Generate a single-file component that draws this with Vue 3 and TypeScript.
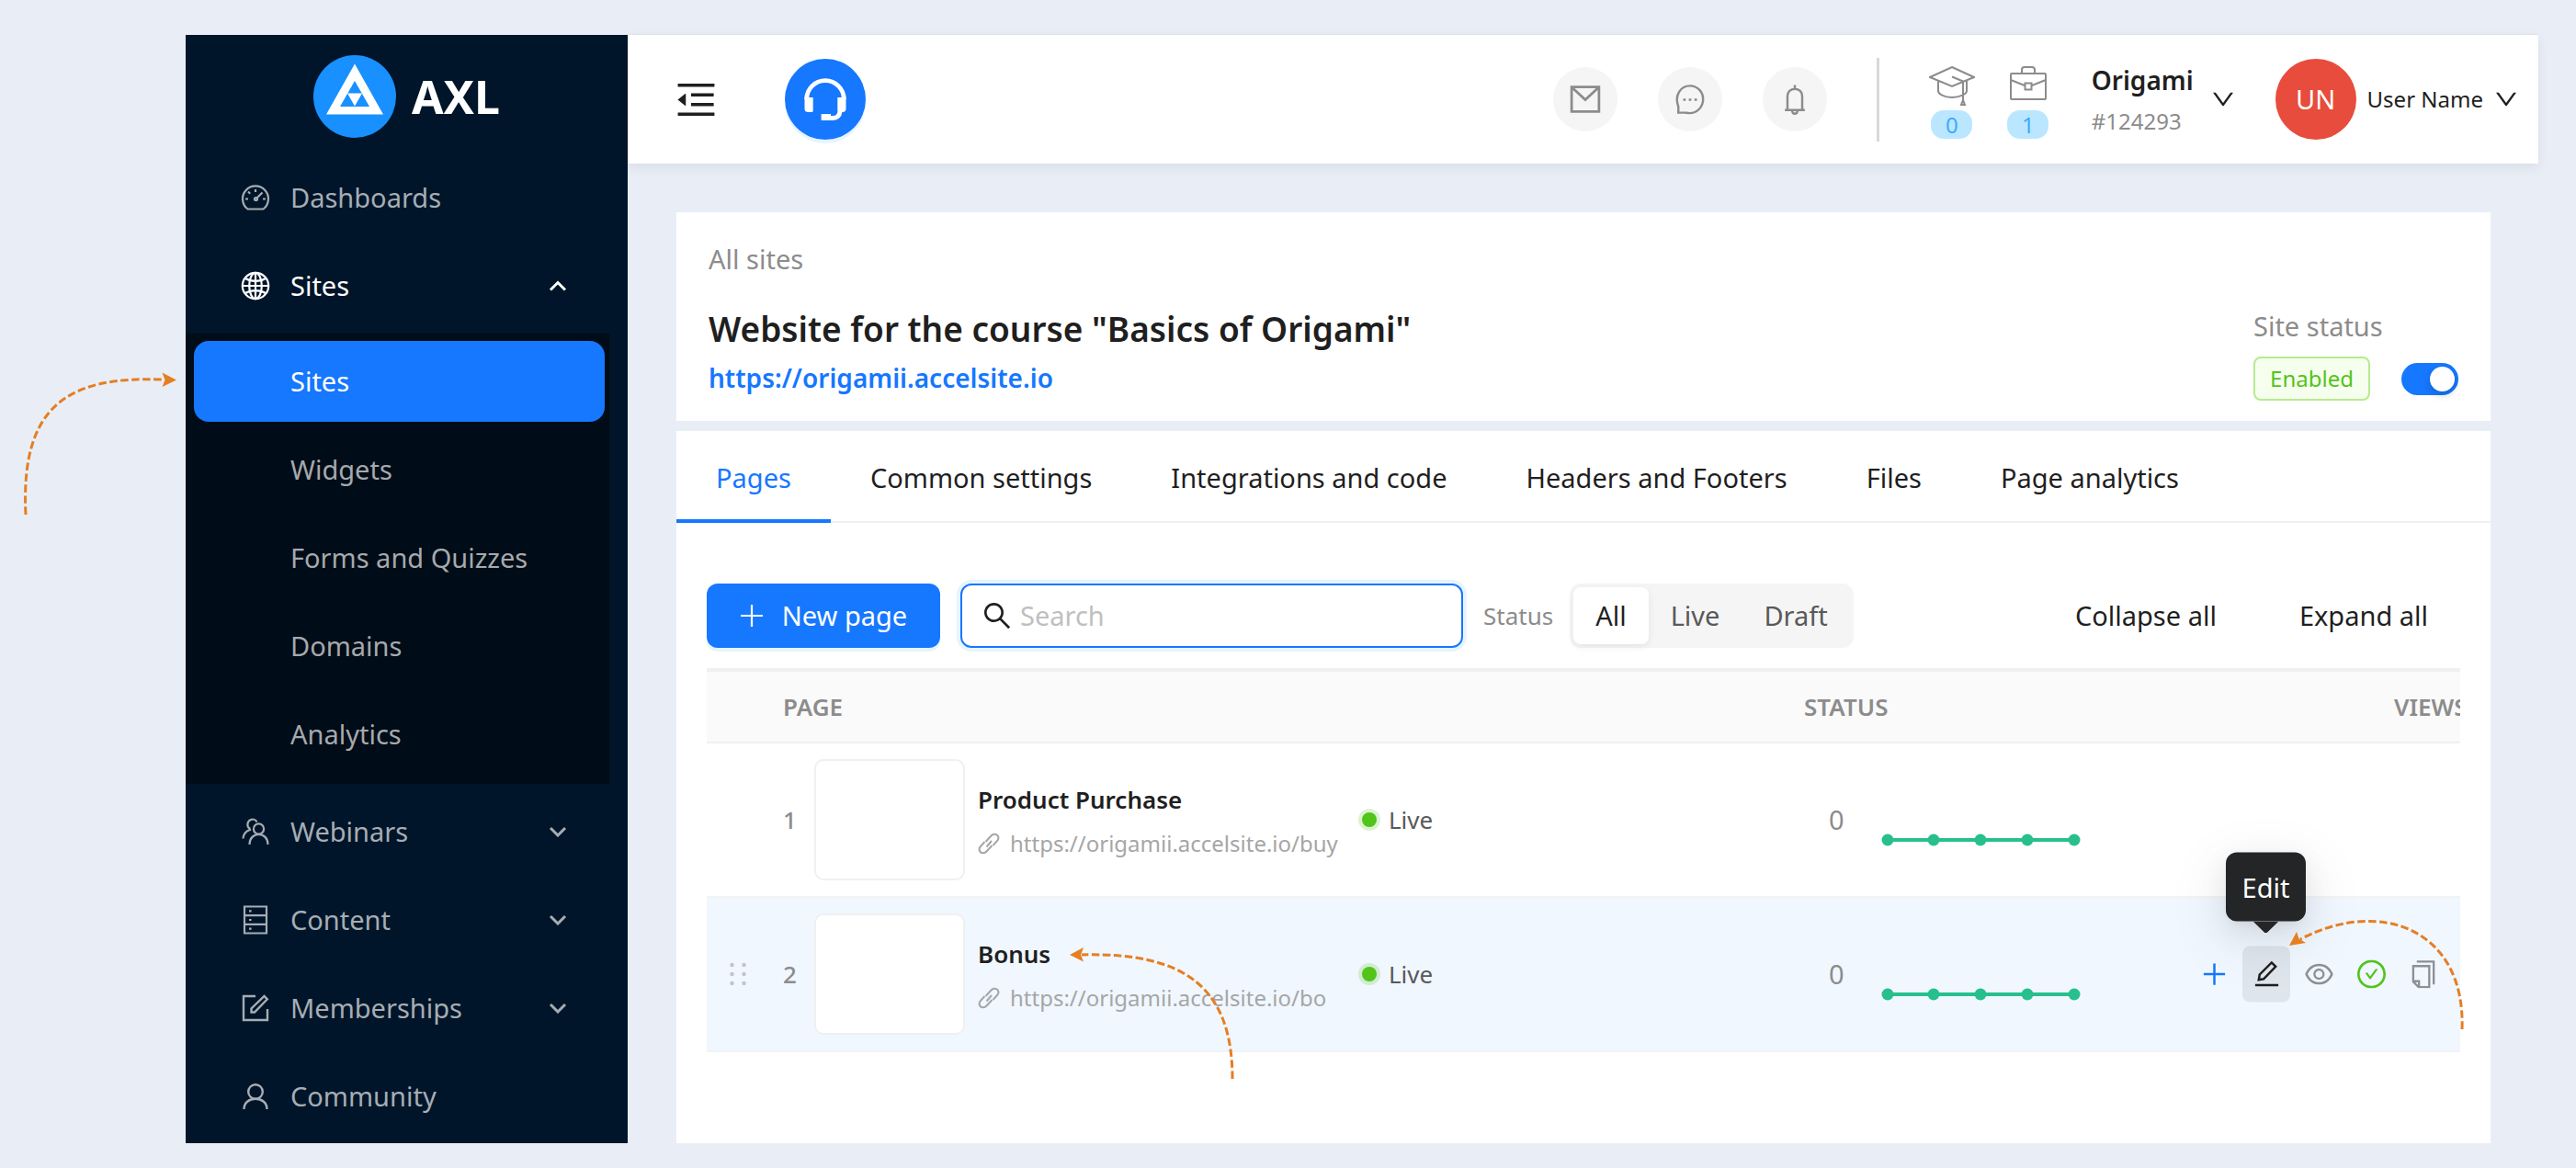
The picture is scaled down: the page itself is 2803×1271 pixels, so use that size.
<script setup lang="ts">
import { ref } from 'vue'

interface PageRow {
  id: number
  name: string
  url: string
  status: string
  views: number
  active: boolean
}

const subItems = ['Sites', 'Widgets', 'Forms and Quizzes', 'Domains', 'Analytics']
const tabs = ['Pages', 'Common settings', 'Integrations and code', 'Headers and Footers', 'Files', 'Page analytics']
const statuses = ['All', 'Live', 'Draft']

const rows: PageRow[] = [
  { id: 1, name: 'Product Purchase', url: 'https://origamii.accelsite.io/buy', status: 'Live', views: 0, active: false },
  { id: 2, name: 'Bonus', url: 'https://origamii.accelsite.io/bo', status: 'Live', views: 0, active: true },
]

const activeSub = ref('Sites')
const activeTab = ref('Pages')
const statusFilter = ref('All')
const search = ref('')
const enabled = ref(true)

const downPath =
  'M884 256h-75c-5.1 0-9.9 2.5-12.9 6.6L512 654.2 227.9 262.6c-3-4.1-7.8-6.6-12.9-6.6h-75c-6.5 0-10.3 7.4-6.5 12.7l352.6 486.1c12.8 17.6 39 17.6 51.7 0l352.6-486.1c3.9-5.3.1-12.7-6.4-12.7z'
const sparkX = [8, 58, 109, 160, 211]
</script>

<template>
  <div class="page">
    <aside class="sidebar">
      <div class="logo">
        <svg class="logo-mark" viewBox="0 0 90 90" aria-hidden="true">
          <circle cx="45" cy="45" r="45" fill="#1890ff" />
          <path fill="#fff" fill-rule="evenodd" d="M45 9.500L76 64.500H14ZM45 28L29 56H61Z" />
          <path fill="#fff" d="M37 41.500H53L45 55.500Z" />
        </svg>
        <span class="logo-text">AXL</span>
      </div>

      <nav class="menu">
        <a class="item" href="#">
          <svg class="ico" viewBox="0 0 32 32" fill="none" stroke="currentColor" stroke-width="2.200">
            <path d="M7.500 28.500H24.500A14 14 0 1 0 7.500 28.500Z" stroke-linejoin="round" />
            <path d="M16 7V10M5 17.500H8M24 17.500H27M8 9.500L10.200 11.700M23.500 10.500L17 17" />
            <circle cx="16.500" cy="17.500" r="1.500" />
          </svg>
          <span>Dashboards</span>
        </a>
        <a class="item open" href="#">
          <svg class="ico" viewBox="0 0 32 32" fill="none" stroke="currentColor" stroke-width="2.200">
            <circle cx="16" cy="16" r="14.200" />
            <ellipse cx="16" cy="16" rx="6.800" ry="14.200" />
            <path d="M16 2V30M2 16H30M5 8C11 11.800 21 11.800 27 8M5 24C11 20.200 21 20.200 27 24" />
          </svg>
          <span>Sites</span>
          <svg class="chev" viewBox="0 0 20 12"><path d="M2 10.500L10 2.500L18 10.500" /></svg>
        </a>
        <div class="sub">
          <a
            v-for="s in subItems"
            :key="s"
            class="item sub-item"
            :class="{ selected: s === activeSub }"
            href="#"
            @click.prevent="activeSub = s"
            >{{ s }}</a
          >
        </div>
        <a class="item" href="#">
          <svg class="ico" viewBox="0 0 32 32" fill="none" stroke="currentColor" stroke-width="2.200">
            <circle cx="19.500" cy="13" r="5.600" />
            <path d="M9.500 30C9.500 23 14 19 19.500 19S29.500 23 29.500 30" />
            <path d="M17.500 5.500C16.500 3 13.500 2 11 3C7 4.500 6 10 9.500 12.500L10 14C5.500 15.500 2.800 19 2.500 23.500" />
          </svg>
          <span>Webinars</span>
          <svg class="chev" viewBox="0 0 20 12"><path d="M2 2L10 10L18 2" /></svg>
        </a>
        <a class="item" href="#">
          <svg class="ico" viewBox="0 0 32 32" fill="none" stroke="currentColor" stroke-width="2.200">
            <path d="M4 1.500H28V30.500H4ZM4 11.200H28M4 20.800H28" />
            <path d="M9 6.400H11.600M9 16H11.600M9 25.600H11.600" />
          </svg>
          <span>Content</span>
          <svg class="chev" viewBox="0 0 20 12"><path d="M2 2L10 10L18 2" /></svg>
        </a>
        <a class="item" href="#">
          <svg class="ico" viewBox="0 0 32 32" fill="none" stroke="currentColor" stroke-width="2.400">
            <path d="M16 3H3V29H29V17" />
            <path d="M11.500 20.500V16.500L25.500 3L28.800 6.300L15 20.500Z" />
          </svg>
          <span>Memberships</span>
          <svg class="chev" viewBox="0 0 20 12"><path d="M2 2L10 10L18 2" /></svg>
        </a>
        <a class="item" href="#">
          <svg class="ico" viewBox="0 0 32 32" fill="none" stroke="currentColor" stroke-width="2.400">
            <circle cx="16" cy="11" r="7.800" />
            <path d="M3.500 30C3.500 23 9 18.800 16 18.800S28.500 23 28.500 30" />
          </svg>
          <span>Community</span>
        </a>
      </nav>

      <svg class="hint hint-side" viewBox="0 0 180 160" aria-hidden="true">
        <path class="dash" d="M18 156C12 36 65 5 168 9" />
        <path class="head" d="M182 9.500L166.500 1.500L169.500 9.500L166.500 17Z" />
      </svg>
    </aside>

    <div class="main">
      <header class="topbar">
        <button class="bare" type="button" aria-label="Collapse menu">
          <svg class="fold" viewBox="0 0 1024 1024">
            <path
              fill="currentColor"
              d="M408 442h480c4.400 0 8-3.600 8-8v-56c0-4.400-3.600-8-8-8H408c-4.400 0-8 3.600-8 8v56c0 4.400 3.600 8 8 8zm-8 204c0 4.400 3.600 8 8 8h480c4.400 0 8-3.600 8-8v-56c0-4.400-3.600-8-8-8H408c-4.400 0-8 3.600-8 8v56zm504-486H120c-4.400 0-8 3.600-8 8v56c0 4.400 3.600 8 8 8h784c4.400 0 8-3.600 8-8v-56c0-4.400-3.600-8-8-8zm0 632H120c-4.400 0-8 3.600-8 8v56c0 4.400 3.600 8 8 8h784c4.400 0 8-3.600 8-8v-56c0-4.400-3.600-8-8-8zM115.400 518.900L271.700 642c5.800 4.600 14.400.5 14.400-6.900V388.900c0-7.400-8.500-11.500-14.400-6.900L115.400 505.100a8.740 8.740 0 000 13.800z"
            />
          </svg>
        </button>
        <button class="support" type="button" aria-label="Support">
          <svg viewBox="0 0 46 46" fill="none" stroke="#fff">
            <path d="M2.700 23A20.300 20.300 0 0 1 43.300 23" stroke-width="4.800" />
            <path d="M0.500 21H9.700V35.500Q9.700 37 8 37H3.500Q0.500 36.500 0.500 33.500ZM45.500 21H36.300V35.500Q36.300 37 38 37H42.500Q45.500 36.500 45.500 33.500Z" fill="#fff" stroke="none" />
            <path d="M39 36.500C38.500 41 35.500 43.500 31.500 43.500H27" stroke-width="5" />
            <path d="M18.600 39H29V46H18.600Z" fill="#fff" stroke="none" />
          </svg>
        </button>

        <div class="top-right">
          <button class="round" type="button" aria-label="Mail">
            <svg viewBox="0 0 32 32"><path d="M2 3.500H30V28.500H2ZM3 4.500L16 16.500L29 4.500" /></svg>
          </button>
          <button class="round" type="button" aria-label="Messages">
            <svg viewBox="0 0 36 36">
              <path d="M4.500 33.500V26.500C-0.500 13 7.500 2.500 18 2.500C26.500 2.500 33 9.500 33 18C33 27 26 34 17.500 34C14.500 34 13.500 33.500 11.500 33.500Z" />
              <path d="M10 18.500H13M16.500 18.500H19.500M23 18.500H26" />
            </svg>
          </button>
          <button class="round" type="button" aria-label="Notifications">
            <svg viewBox="0 0 36 36">
              <path d="M6.500 30.500H29.500M9.500 30.500V14.500C9.500 9.500 13 6 18 6S26.500 9.500 26.500 14.500V30.500M18 6V1.500M15 31C15 36 21 36 21 31" />
            </svg>
          </button>
          <span class="divider"></span>
          <div class="counters">
            <div class="counter">
              <svg class="cap" viewBox="0 0 50 44">
                <path d="M25 1L49 12L25 22L1 12ZM10 16V27C10 30 16 34 25 34S41 30 41 27V16M25 11.500L37 16.500V38M37 37L35 42H39Z" />
              </svg>
              <span class="pill">0</span>
            </div>
            <div class="counter">
              <svg class="cap" viewBox="0 0 50 44">
                <path d="M7 8H43Q44 8 44 9V35Q44 36 43 36H7Q6 36 6 35V9Q6 8 7 8ZM18 8V4Q18 1 21 1H29Q32 1 32 4V8M6 15L21 21M44 15L29 21M21.500 18.500H28.500V25.500H21.500Z" />
              </svg>
              <span class="pill">1</span>
            </div>
          </div>
          <button class="bare account" type="button">
            <span class="acc-text">
              <span class="acc-name">Origami</span>
              <span class="acc-id">#124293</span>
            </span>
            <svg class="down" viewBox="132 232 760 560"><path :d="downPath" fill="currentColor" /></svg>
          </button>
          <button class="bare user" type="button">
            <span class="avatar">UN</span>
            <span class="user-name">User Name</span>
            <svg class="down" viewBox="132 232 760 560"><path :d="downPath" fill="currentColor" /></svg>
          </button>
        </div>
      </header>

      <main class="content">
        <section class="card info">
          <div>
            <a class="crumb" href="#">All sites</a>
            <h1>Website for the course "Basics of Origami"</h1>
            <a class="site-url" href="#">https://origamii.accelsite.io</a>
          </div>
          <div class="site-status">
            <label for="site-switch">Site status</label>
            <div class="status-row">
              <span class="tag">Enabled</span>
              <input id="site-switch" v-model="enabled" class="switch" type="checkbox" role="switch" />
            </div>
          </div>
        </section>

        <section class="card pages">
          <nav class="tabs">
            <button
              v-for="t in tabs"
              :key="t"
              type="button"
              class="tab"
              :class="{ current: t === activeTab }"
              @click="activeTab = t"
            >
              {{ t }}
            </button>
          </nav>

          <div class="toolbar">
            <button class="primary" type="button">
              <svg viewBox="0 0 26 26"><path d="M13 1V25M1 13H25" stroke="#fff" stroke-width="2.200" /></svg>
              <span>New page</span>
            </button>
            <label class="search">
              <svg viewBox="112 112 800 800">
                <path
                  fill="currentColor"
                  d="M909.600 854.500L649.900 594.800C690.200 542.700 712 479 712 412c0-80.200-31.300-155.400-87.900-212.100-56.600-56.700-132-87.900-212.100-87.900s-155.500 31.300-212.100 87.900C143.200 256.500 112 331.800 112 412c0 80.100 31.300 155.500 87.900 212.100C256.500 680.800 331.800 712 412 712c67 0 130.600-21.800 182.700-62l259.700 259.600a8.200 8.200 0 0011.600 0l43.600-43.500a8.200 8.200 0 000-11.600zM570.400 570.400C528 612.700 471.800 636 412 636s-116-23.300-158.400-65.600C211.300 528 188 471.800 188 412s23.300-116.100 65.600-158.400C296 211.300 352.200 188 412 188s116.100 23.200 158.400 65.600S636 352.200 636 412s-23.300 116.100-65.600 158.400z"
                />
              </svg>
              <input v-model="search" type="text" placeholder="Search" aria-label="Search" />
            </label>
            <div class="filter" role="radiogroup" aria-labelledby="status-label">
              <span id="status-label" class="filter-label">Status</span>
              <div class="segmented">
                <label v-for="s in statuses" :key="s" :class="{ on: s === statusFilter }">
                  <input v-model="statusFilter" type="radio" name="status" :value="s" />{{ s }}
                </label>
              </div>
            </div>
            <div class="tree-actions">
              <button class="text-btn" type="button">Collapse all</button>
              <button class="text-btn" type="button">Expand all</button>
            </div>
          </div>

          <div class="table-area">
            <table>
              <colgroup>
                <col class="c-page" />
                <col />
                <col class="c-spark" />
                <col class="c-views" />
              </colgroup>
              <thead>
                <tr>
                  <th class="th-page" colspan="2">PAGE</th>
                  <th>STATUS</th>
                  <th class="th-views">VIEWS</th>
                </tr>
              </thead>
              <tbody>
                <tr v-for="r in rows" :key="r.id" :class="{ hover: r.active }">
                  <td>
                    <div class="page-cell">
                      <span class="handle">
                        <svg v-if="r.active" viewBox="0 0 18 26">
                          <circle v-for="n in 6" :key="n" :cx="n % 2 ? 2.5 : 15.5" :cy="3 + 10 * Math.floor((n - 1) / 2)" r="2.200" />
                        </svg>
                      </span>
                      <span class="num">{{ r.id }}</span>
                      <span class="thumb"></span>
                      <span class="names">
                        <span class="name">{{ r.name }}</span>
                        <a class="link" href="#">
                          <svg viewBox="0 0 24 24" fill="none" stroke="currentColor" stroke-width="2">
                            <path d="M8.500 10L14.500 3.500C16.500 1.200 19.800 1.200 21.300 3C22.800 4.800 22.500 7.500 20.800 9.300L16.500 14M15.500 14L9.500 20.500C7.500 22.800 4.200 22.800 2.700 21C1.200 19.200 1.500 16.500 3.200 14.700L7.500 10" />
                            <path d="M9.500 15.500L15 9" />
                          </svg>
                          <span>{{ r.url }}</span>
                        </a>
                      </span>
                    </div>
                  </td>
                  <td>
                    <div class="live"><i class="dot"></i>{{ r.status }}</div>
                  </td>
                  <td>
                    <div class="views">
                      <span>{{ r.views }}</span>
                      <svg class="spark" viewBox="0 0 220 14">
                        <path d="M8 7H211" stroke="#27c08d" stroke-width="4" />
                        <circle v-for="x in sparkX" :key="x" :cx="x" cy="7" r="6.500" fill="#27c08d" />
                      </svg>
                    </div>
                  </td>
                  <td class="last">
                    <div v-if="r.active" class="row-actions">
                      <button type="button" class="act blue" aria-label="Add">
                        <svg viewBox="0 0 32 32"><path d="M16 4V28M4 16H28" stroke-width="2.600" /></svg>
                      </button>
                      <button type="button" class="act pressed" aria-label="Edit page">
                        <svg viewBox="0 0 32 32"><path d="M3 28.500H29M7 22.500L8 16.500L21.500 3L26 7.500L12.500 21.500Z" stroke-width="2.600" /></svg>
                        <span class="tooltip" role="tooltip">Edit</span>
                      </button>
                      <button type="button" class="act" aria-label="Preview">
                        <svg viewBox="64 64 896 896">
                          <path
                            class="solid"
                            d="M942.200 486.200C847.400 286.500 704.100 186 512 186c-192.200 0-335.400 100.500-430.200 300.300a60.300 60.300 0 000 51.500C176.600 737.500 319.900 838 512 838c192.200 0 335.400-100.500 430.200-300.300 7.700-16.200 7.700-35 0-51.500zM512 766c-161.300 0-279.400-81.800-362.700-254C232.600 339.800 350.700 258 512 258c161.300 0 279.400 81.800 362.700 254C791.500 684.200 673.400 766 512 766zm-4-430c-97.200 0-176 78.800-176 176s78.800 176 176 176 176-78.800 176-176-78.800-176-176-176zm0 288c-61.900 0-112-50.100-112-112s50.100-112 112-112 112 50.100 112 112-50.100 112-112 112z"
                          />
                        </svg>
                      </button>
                      <button type="button" class="act green" aria-label="Publish">
                        <svg viewBox="64 64 896 896">
                          <path
                            class="solid"
                            d="M699 353h-46.900c-10.200 0-19.900 4.900-25.900 13.300L469 584.300l-71.200-98.800c-6-8.300-15.600-13.300-25.900-13.300H325c-6.500 0-10.300 7.400-6.500 12.700l124.600 172.800a31.800 31.800 0 0051.700 0l210.600-292c3.900-5.300.1-12.700-6.400-12.700z"
                          />
                          <path
                            class="solid"
                            d="M512 64C264.600 64 64 264.600 64 512s200.600 448 448 448 448-200.600 448-448S759.400 64 512 64zm0 820c-205.400 0-372-166.600-372-372s166.600-372 372-372 372 166.600 372 372-166.600 372-372 372z"
                          />
                        </svg>
                      </button>
                      <button type="button" class="act" aria-label="Copy">
                        <svg viewBox="0 0 32 32">
                          <path d="M8 2H27V27.500M4 7H22V30.500H10L4 24.500ZM4 24H10.500V30" stroke-width="2.400" />
                        </svg>
                      </button>
                    </div>
                  </td>
                </tr>
              </tbody>
            </table>

            <svg class="hint hint-name" viewBox="0 0 190 150" aria-hidden="true">
              <path class="dash" d="M181 145C181 46 130 7 17 10" />
              <path class="head" d="M4 10L19 2L16 10L19 17.500Z" />
            </svg>
            <svg class="hint hint-edit" viewBox="0 0 200 130" aria-hidden="true">
              <path class="dash" d="M188 126C192 18 100 -18 12 28" />
              <path class="head" d="M0 35L8 20L10.500 27.500L18 32Z" />
            </svg>
          </div>
        </section>
      </main>
    </div>
  </div>
</template>

<style>
body {
  margin: 0;
}
</style>

<style scoped>
.page {
  box-sizing: border-box;
  min-height: 100vh;
  display: flex;
  padding: 38px 41px 27px 202px;
  background: #e9eef6;
  color: #1f1f1f;
  font: 29px/44px 'Noto Sans', 'Open Sans', sans-serif;
}
.page *,
.page *::before {
  box-sizing: border-box;
}
a {
  color: inherit;
  text-decoration: none;
}
button {
  font: inherit;
  color: inherit;
  cursor: pointer;
  border: 0;
  padding: 0;
  background: none;
}
svg {
  display: block;
  flex: none;
}

/* sidebar */
.sidebar {
  position: relative;
  flex: none;
  width: 481px;
  background: #001529;
}
.logo {
  display: flex;
  justify-content: center;
  align-items: center;
  gap: 17px;
  padding-top: 22px;
  margin-bottom: 21px;
}
.logo-mark {
  width: 90px;
  height: 90px;
}
.logo-text {
  color: #fff;
  font-size: 50px;
  font-weight: 700;
}
.menu {
  display: flex;
  flex-direction: column;
  gap: 8px;
}
.item {
  display: flex;
  align-items: center;
  height: 88px;
  padding: 0 66px 0 60px;
  color: #a6adb4;
}
.item.open {
  color: #fff;
}
.ico {
  width: 32px;
  height: 32px;
  margin-right: 22px;
}
.chev {
  width: 20px;
  height: 12px;
  margin-left: auto;
  fill: none;
  stroke: currentColor;
  stroke-width: 3;
}
.sub {
  display: flex;
  flex-direction: column;
  gap: 8px;
  width: 461px;
  padding: 8px 5px 10px 9px;
  background: #000c17;
}
.sub-item {
  padding: 0 0 0 105px;
  border-radius: 16px;
  color: #a6a9ad;
}
.sub-item.selected {
  background: #1677ff;
  color: #fff;
}

/* top bar */
.main {
  flex: 1;
  min-width: 0;
  display: flex;
  flex-direction: column;
}
.topbar {
  display: flex;
  align-items: center;
  height: 140px;
  padding: 0 24px 0 49px;
  background: #fff;
  box-shadow: 0 -1px 0 #dfe3e8, 0 4px 12px rgba(0, 21, 41, 0.08);
}
.fold {
  width: 51px;
  height: 51px;
}
.support {
  display: grid;
  place-items: center;
  width: 88px;
  height: 88px;
  margin-left: 71px;
  border-radius: 50%;
  background: #1677ff;
  box-shadow: 0 4px 0 rgba(5, 145, 255, 0.1);
}
.support svg {
  width: 46px;
  height: 46px;
}
.top-right {
  display: flex;
  align-items: center;
  margin-left: auto;
}
.round {
  display: grid;
  place-items: center;
  width: 70px;
  height: 70px;
  margin-right: 44px;
  border-radius: 50%;
  background: #f5f5f5;
}
.round svg {
  width: 34px;
  height: 36px;
  fill: none;
  stroke: #8c8c8c;
  stroke-width: 2.6;
}
.divider {
  width: 3px;
  height: 91px;
  margin: 0 54px 0 10px;
  background: #d9d9d9;
}
.counters {
  display: flex;
  gap: 33px;
  padding-top: 7px;
}
.counter {
  display: flex;
  flex-direction: column;
  align-items: center;
  gap: 4px;
}
.cap {
  width: 50px;
  height: 44px;
  fill: none;
  stroke: #8c8c8c;
  stroke-width: 2;
}
.pill {
  width: 45px;
  height: 31px;
  border-radius: 14px;
  background: #bae7ff;
  color: #40a9ff;
  font-size: 24px;
  line-height: 31px;
  text-align: center;
}
.account {
  display: flex;
  align-items: center;
  gap: 21px;
  margin-left: 44px;
  text-align: left;
}
.acc-text {
  display: flex;
  flex-direction: column;
  padding-top: 2px;
}
.acc-name {
  font-size: 28px;
  font-weight: 600;
  line-height: 46px;
}
.acc-id {
  color: #8c8c8c;
  font-size: 24px;
}
.down {
  width: 22px;
  height: 16px;
}
.user {
  display: flex;
  align-items: center;
  margin-left: 46px;
}
.avatar {
  width: 88px;
  height: 88px;
  margin-right: 12px;
  border-radius: 50%;
  background: #e74c3c;
  color: #fff;
  line-height: 88px;
}
.user-name {
  margin-right: 14px;
  font-size: 24px;
}

/* content */
.content {
  flex: 1;
  display: flex;
  flex-direction: column;
  gap: 11px;
  padding: 53px 52px 0 53px;
}
.card {
  background: #fff;
}
.info {
  display: flex;
  justify-content: space-between;
  align-items: flex-end;
  padding: 28px 35px 22px;
}
.crumb {
  display: block;
  color: #8c8c8c;
  line-height: 46px;
}
h1 {
  margin: 23px 0 0;
  font-size: 37px;
  font-weight: 600;
  line-height: 60px;
}
.site-url {
  display: block;
  margin-bottom: 2px;
  color: #1677ff;
  font-size: 28px;
  font-weight: 600;
  line-height: 46px;
}
.site-status label {
  color: #8c8c8c;
}
.status-row {
  display: flex;
  align-items: center;
  gap: 34px;
  margin-top: 11px;
}
.tag {
  width: 127px;
  height: 48px;
  border: 2px solid #b7eb8f;
  border-radius: 8px;
  background: #f6ffed;
  color: #52c41a;
  font-size: 24px;
  text-align: center;
}
.switch {
  appearance: none;
  width: 62px;
  height: 35px;
  margin: 0;
  padding: 4px;
  border-radius: 18px;
  background: #bfbfbf;
}
.switch::before {
  content: '';
  display: block;
  width: 27px;
  height: 27px;
  border-radius: 50%;
  background: #fff;
  box-shadow: 0 4px 8px rgba(0, 35, 11, 0.2);
}
.switch:checked {
  background: #1677ff;
}
.switch:checked::before {
  margin-left: auto;
}
.pages {
  flex: 1;
}
.tabs {
  display: flex;
  box-shadow: inset 0 -2px 0 #f0f0f0;
}
.tab {
  height: 100px;
  padding: 6px 43px 0;
  border-bottom: 4px solid transparent;
}
.tab.current {
  border-color: #1677ff;
  color: #1677ff;
}

/* toolbar */
.toolbar {
  display: flex;
  align-items: center;
  gap: 22px;
  padding: 66px 33px 22px;
}
.primary {
  display: flex;
  justify-content: center;
  align-items: center;
  gap: 20px;
  width: 254px;
  height: 70px;
  border-radius: 12px;
  background: #1677ff;
  color: #fff;
  box-shadow: 0 4px 0 rgba(5, 145, 255, 0.1);
}
.primary svg {
  width: 26px;
  height: 26px;
}
.search {
  flex: 0 1 547px;
  display: flex;
  align-items: center;
  gap: 11px;
  height: 70px;
  padding: 0 24px;
  border: 2px solid #1677ff;
  border-radius: 12px;
  box-shadow: 0 0 0 4px rgba(5, 145, 255, 0.1);
}
.search svg {
  width: 28px;
  height: 28px;
}
.search input {
  flex: 1;
  min-width: 0;
  padding: 0;
  border: 0;
  outline: 0;
  background: none;
  font: inherit;
  color: inherit;
}
.search input::placeholder {
  color: #bfbfbf;
}
.filter {
  display: flex;
  align-items: center;
  gap: 18px;
}
.filter-label {
  color: #8c8c8c;
  font-size: 26px;
}
.segmented {
  display: flex;
  padding: 4px;
  border-radius: 12px;
  background: #f5f5f5;
  color: #595959;
}
.segmented label {
  position: relative;
  height: 62px;
  padding: 0 24px;
  border-radius: 8px;
  line-height: 62px;
}
.segmented .on {
  background: #fff;
  color: #1f1f1f;
  box-shadow: 0 4px 8px rgba(0, 0, 0, 0.04), 0 2px 12px rgba(0, 0, 0, 0.03);
}
.segmented input {
  position: absolute;
  opacity: 0;
}
.tree-actions {
  display: flex;
  gap: 20px;
  margin-left: auto;
}
.text-btn {
  height: 70px;
  padding: 0 35px;
}

/* table */
.table-area {
  position: relative;
  margin: 0 33px;
}
table {
  width: 100%;
  table-layout: fixed;
  border-collapse: separate;
  border-spacing: 0;
}
.c-page {
  width: 701px;
}
.c-spark {
  width: 632px;
}
.c-views {
  width: 82px;
}
th {
  height: 82px;
  padding: 0;
  border-top: 4px solid #f0f0f0;
  border-bottom: 2px solid #f0f0f0;
  background: #fafafa;
  color: #8c8c8c;
  font-size: 26px;
  font-weight: 600;
  text-align: left;
}
.th-page {
  padding-left: 83px;
}
.th-views {
  padding-left: 10px;
  overflow: hidden;
  white-space: nowrap;
}
td {
  height: 168px;
  padding: 0;
  border-bottom: 2px solid #f2f3f4;
}
.hover td {
  background: #f0f7ff;
}
.page-cell {
  display: flex;
  align-items: center;
  padding-right: 13px;
}
.handle {
  flex: none;
  width: 83px;
  padding-left: 25px;
}
.handle svg {
  width: 18px;
  height: 26px;
  fill: #bfc4cc;
}
.num {
  flex: none;
  width: 34px;
  color: #8c8c8c;
  font-size: 26px;
  font-weight: 500;
}
.thumb {
  flex: none;
  width: 164px;
  height: 132px;
  margin-right: 14px;
  border: 2px solid #f0f0f0;
  border-radius: 10px;
  background: #fff;
}
.names {
  flex: 1;
  min-width: 0;
  padding-top: 4px;
  overflow: hidden;
  line-height: 48px;
}
.name {
  display: block;
  font-size: 26px;
  font-weight: 600;
}
.link {
  display: flex;
  align-items: center;
  gap: 11px;
  color: #a6a6a6;
  font-size: 24px;
  white-space: nowrap;
}
.link svg {
  width: 24px;
  height: 24px;
}
.live {
  display: flex;
  align-items: center;
  gap: 13px;
  padding-left: 12px;
  color: #595959;
  font-size: 26px;
}
.dot {
  width: 16px;
  height: 16px;
  border-radius: 50%;
  background: #52c41a;
  box-shadow: 0 0 0 4px rgba(82, 196, 26, 0.2);
}
.views {
  display: flex;
  align-items: center;
  padding-left: 27px;
  color: #8c8c8c;
}
.spark {
  width: 220px;
  height: 14px;
  margin: 44px 0 0 39px;
}
.last {
  position: relative;
}
.row-actions {
  position: absolute;
  top: 50%;
  right: 14px;
  display: flex;
  gap: 5px;
  transform: translateY(-50%);
}
.act {
  position: relative;
  display: grid;
  place-items: center;
  width: 52px;
  height: 61px;
  border-radius: 8px;
  color: #8c8f94;
}
.act svg {
  width: 31px;
  height: 31px;
  fill: none;
  stroke: currentColor;
}
.act .solid {
  fill: currentColor;
  stroke: none;
}
.blue {
  color: #1677ff;
}
.green {
  color: #52c41a;
}
.pressed {
  background: rgba(0, 0, 0, 0.07);
  color: #1f1f1f;
}
.tooltip {
  position: absolute;
  bottom: 88px;
  left: 50%;
  width: 87px;
  height: 75px;
  margin-left: -44px;
  border-radius: 12px;
  background: #242526;
  color: #fff;
  line-height: 75px;
  box-shadow: 0 12px 32px rgba(0, 0, 0, 0.08), 0 6px 12px -8px rgba(0, 0, 0, 0.12), 0 18px 56px 16px rgba(0, 0, 0, 0.05);
}
.tooltip::after {
  content: '';
  position: absolute;
  top: 100%;
  left: 50%;
  width: 28px;
  height: 13px;
  margin-left: -14px;
  background: #242526;
  clip-path: polygon(0 0, 100% 0, 57% 90%, 50% 100%, 43% 90%);
}

/* guide arrows */
.hint {
  position: absolute;
  overflow: visible;
  pointer-events: none;
}
.dash {
  fill: none;
  stroke: #e67e22;
  stroke-width: 3;
  stroke-dasharray: 8.5 3.5;
}
.head {
  fill: #e67e22;
}
.hint-side {
  top: 366px;
  left: -192px;
  width: 180px;
  height: 160px;
}
.hint-name {
  top: 302px;
  left: 391px;
  width: 190px;
  height: 150px;
}
.hint-edit {
  top: 267px;
  right: -14px;
  width: 200px;
  height: 130px;
}
</style>
